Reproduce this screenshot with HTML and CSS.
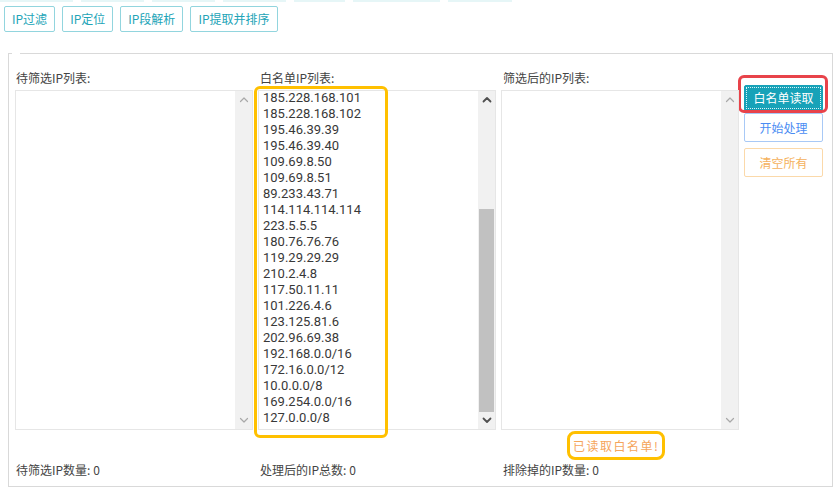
FILE: index.html
```html
<!DOCTYPE html>
<html lang="zh-CN">
<head>
<meta charset="utf-8">
<title>IP过滤</title>
<link rel="stylesheet" href="styles.css">
</head>
<body>
<div class="ghost-row"><span></span><span></span><span></span><span></span><span></span><span></span><span></span></div>
<nav class="toolbar">
  <button class="tab">IP过滤</button>
  <button class="tab">IP定位</button>
  <button class="tab">IP段解析</button>
  <button class="tab">IP提取并排序</button>
</nav>
<fieldset class="panel">
  <legend class="panel-legend"></legend>
  <div class="grid">
    <div class="col-label col-1">待筛选IP列表:</div>
    <div class="col-label col-2">白名单IP列表:</div>
    <div class="col-label col-3">筛选后的IP列表:</div>

    <div class="actions">
      <div class="mark-wrap">
        <button class="act act-read">白名单读取</button>
        <span class="mark-red"></span>
      </div>
      <button class="act act-start">开始处理</button>
      <button class="act act-clear">清空所有</button>
    </div>

    <div class="listbox col-1 row-box">
      <div class="list-content"></div>
      <div class="sbar idle">
        <span class="arrow"><svg width="10" height="7" viewBox="0 0 10 7"><polyline points="1.5,5.5 5,2 8.5,5.5" /></svg></span>
        <span class="track"></span>
        <span class="arrow"><svg width="10" height="7" viewBox="0 0 10 7"><polyline points="1.5,1.5 5,5 8.5,1.5" /></svg></span>
      </div>
    </div>

    <div class="listbox col-2 row-box">
      <div class="list-content">
        <div class="ip-list">
          <div>185.228.168.101</div>
          <div>185.228.168.102</div>
          <div>195.46.39.39</div>
          <div>195.46.39.40</div>
          <div>109.69.8.50</div>
          <div>109.69.8.51</div>
          <div>89.233.43.71</div>
          <div>114.114.114.114</div>
          <div>223.5.5.5</div>
          <div>180.76.76.76</div>
          <div>119.29.29.29</div>
          <div>210.2.4.8</div>
          <div>117.50.11.11</div>
          <div>101.226.4.6</div>
          <div>123.125.81.6</div>
          <div>202.96.69.38</div>
          <div>192.168.0.0/16</div>
          <div>172.16.0.0/12</div>
          <div>10.0.0.0/8</div>
          <div>169.254.0.0/16</div>
          <div>127.0.0.0/8</div>
        </div>
      </div>
      <div class="sbar active">
        <span class="arrow"><svg width="10" height="7" viewBox="0 0 10 7"><polyline points="1.5,5.5 5,2 8.5,5.5" /></svg></span>
        <span class="track"><span class="thumb"></span></span>
        <span class="arrow"><svg width="10" height="7" viewBox="0 0 10 7"><polyline points="1.5,1.5 5,5 8.5,1.5" /></svg></span>
      </div>
      <span class="mark-yellow"></span>
    </div>

    <div class="listbox col-3 row-box">
      <div class="list-content"></div>
      <div class="sbar idle">
        <span class="arrow"><svg width="10" height="7" viewBox="0 0 10 7"><polyline points="1.5,5.5 5,2 8.5,5.5" /></svg></span>
        <span class="track"></span>
        <span class="arrow"><svg width="10" height="7" viewBox="0 0 10 7"><polyline points="1.5,1.5 5,5 8.5,1.5" /></svg></span>
      </div>
    </div>

    <div class="status col-3"><span class="status-msg">已读取白名单!</span></div>

    <div class="count col-1">待筛选IP数量: 0</div>
    <div class="count col-2">处理后的IP总数: 0</div>
    <div class="count col-3">排除掉的IP数量: 0</div>
  </div>
</fieldset>
</body>
</html>
```

FILE: styles.css
```css
* { box-sizing: border-box; }

html, body {
  margin: 0;
  padding: 0;
  background: #ffffff;
}

body {
  width: 837px;
  height: 490px;
  overflow: hidden;
  font-family: "Microsoft YaHei", "Noto Sans CJK SC", "Noto Sans", sans-serif;
  font-size: 12px;
  color: #444;
}

.ghost-row {
  display: grid;
  grid-template-columns: 73px 63px 63px 63px 51px 87px 64px;
  column-gap: 8px;
  height: 2px;
}
.ghost-row span {
  background: #e6f6f7;
}

.toolbar {
  display: flex;
  gap: 7px;
  margin-top: 4px;
  padding-left: 4px;
}

.tab {
  height: 26px;
  padding: 0 7px;
  border: 1px solid #92d5de;
  border-radius: 2px;
  background: #fff;
  color: #22a4b7;
  font-family: inherit;
  font-size: 12px;
  line-height: 24px;
}

.panel {
  margin: 21px 4px 0 8px;
  padding: 16px 9px 6px 6px;
  border: 1px solid #d9d9d9;
  min-width: 0;
}

.panel-legend {
  margin-left: -3px;
  padding: 0 4px;
  height: 0;
  line-height: 0;
  font-size: 0;
}

.grid {
  display: grid;
  grid-template-columns: 238px 238px 238px 79px;
  grid-template-rows: 20px 340px 30px 20px;
  column-gap: 5px;
}

.col-1 { grid-column: 1; }
.col-2 { grid-column: 2; }
.col-3 { grid-column: 3; }

.col-label {
  grid-row: 1;
  padding-left: 1px;
  line-height: 16px;
  color: #444;
}
.col-label.col-2, .col-label.col-3 { padding-left: 2px; }

.row-box { grid-row: 2; }

.listbox {
  position: relative;
  display: flex;
  border: 1px solid #e6e6e6;
  background: #fff;
}

.list-content {
  flex: 1;
  overflow: hidden;
  padding: 0 4px;
}

.ip-list {
  margin-top: -1px;
  font-family: Roboto, "Noto Sans CJK SC", sans-serif;
  font-size: 13px;
  line-height: 16px;
  color: #383838;
}

.sbar {
  width: 17px;
  display: flex;
  flex-direction: column;
  background: #f1f1f1;
}
.sbar .arrow {
  height: 17px;
  display: flex;
  align-items: center;
  justify-content: center;
}
.sbar svg polyline {
  fill: none;
  stroke-linecap: round;
  stroke-linejoin: round;
}
.sbar.idle svg polyline {
  stroke: #a8a8a8;
  stroke-width: 1.2;
}
.sbar.active svg polyline {
  stroke: #505050;
  stroke-width: 1.8;
}
.sbar .track {
  flex: 1;
  display: flex;
  flex-direction: column;
  justify-content: flex-end;
}
.sbar .thumb {
  height: 203px;
  margin: 0 1px;
  background: #c1c1c1;
}

.mark-yellow {
  position: absolute;
  left: -5px;
  top: -5px;
  width: 134px;
  height: 352px;
  border: 3px solid #ffc000;
  border-radius: 6px;
  pointer-events: none;
}

.actions {
  grid-column: 4;
  grid-row: 1 / span 2;
  padding-top: 15px;
  display: flex;
  flex-direction: column;
}

.mark-wrap {
  position: relative;
  margin-bottom: 2px;
}

.mark-red {
  position: absolute;
  left: -6px;
  top: -10px;
  width: 90px;
  height: 38px;
  border: 3px solid #e8434a;
  border-radius: 6px;
  pointer-events: none;
}

.act {
  width: 79px;
  height: 29px;
  padding: 0;
  border: 1px solid;
  border-radius: 2px;
  background: #fff;
  font-family: inherit;
  font-size: 12px;
  line-height: 27px;
}

.act-read {
  display: block;
  height: 26px;
  line-height: 24px;
  background: #17a2b8;
  border-color: #17a2b8;
  color: #fff;
  outline: 1px dotted #d9f3f6;
  outline-offset: -3px;
}

.act-start {
  border-color: #a8c9f6;
  color: #4a8cf3;
  margin-bottom: 6px;
}

.act-clear {
  border-color: #fbd9aa;
  color: #f5b15c;
}

.status {
  grid-row: 3;
  display: flex;
  align-items: center;
  padding-left: 69px;
}

.status-msg {
  display: inline-block;
  width: 92px;
  height: 23px;
  line-height: 23px;
  padding-left: 3px;
  white-space: nowrap;
  overflow: hidden;
  font-size: 12px;
  letter-spacing: 1.5px;
  color: #f5a55c;
  outline: 3px solid #ffc000;
  border-radius: 5px;
}

.count {
  grid-row: 4;
  line-height: 20px;
  padding-left: 1px;
  color: #444;
}
.count.col-2, .count.col-3 { padding-left: 2px; }
```
